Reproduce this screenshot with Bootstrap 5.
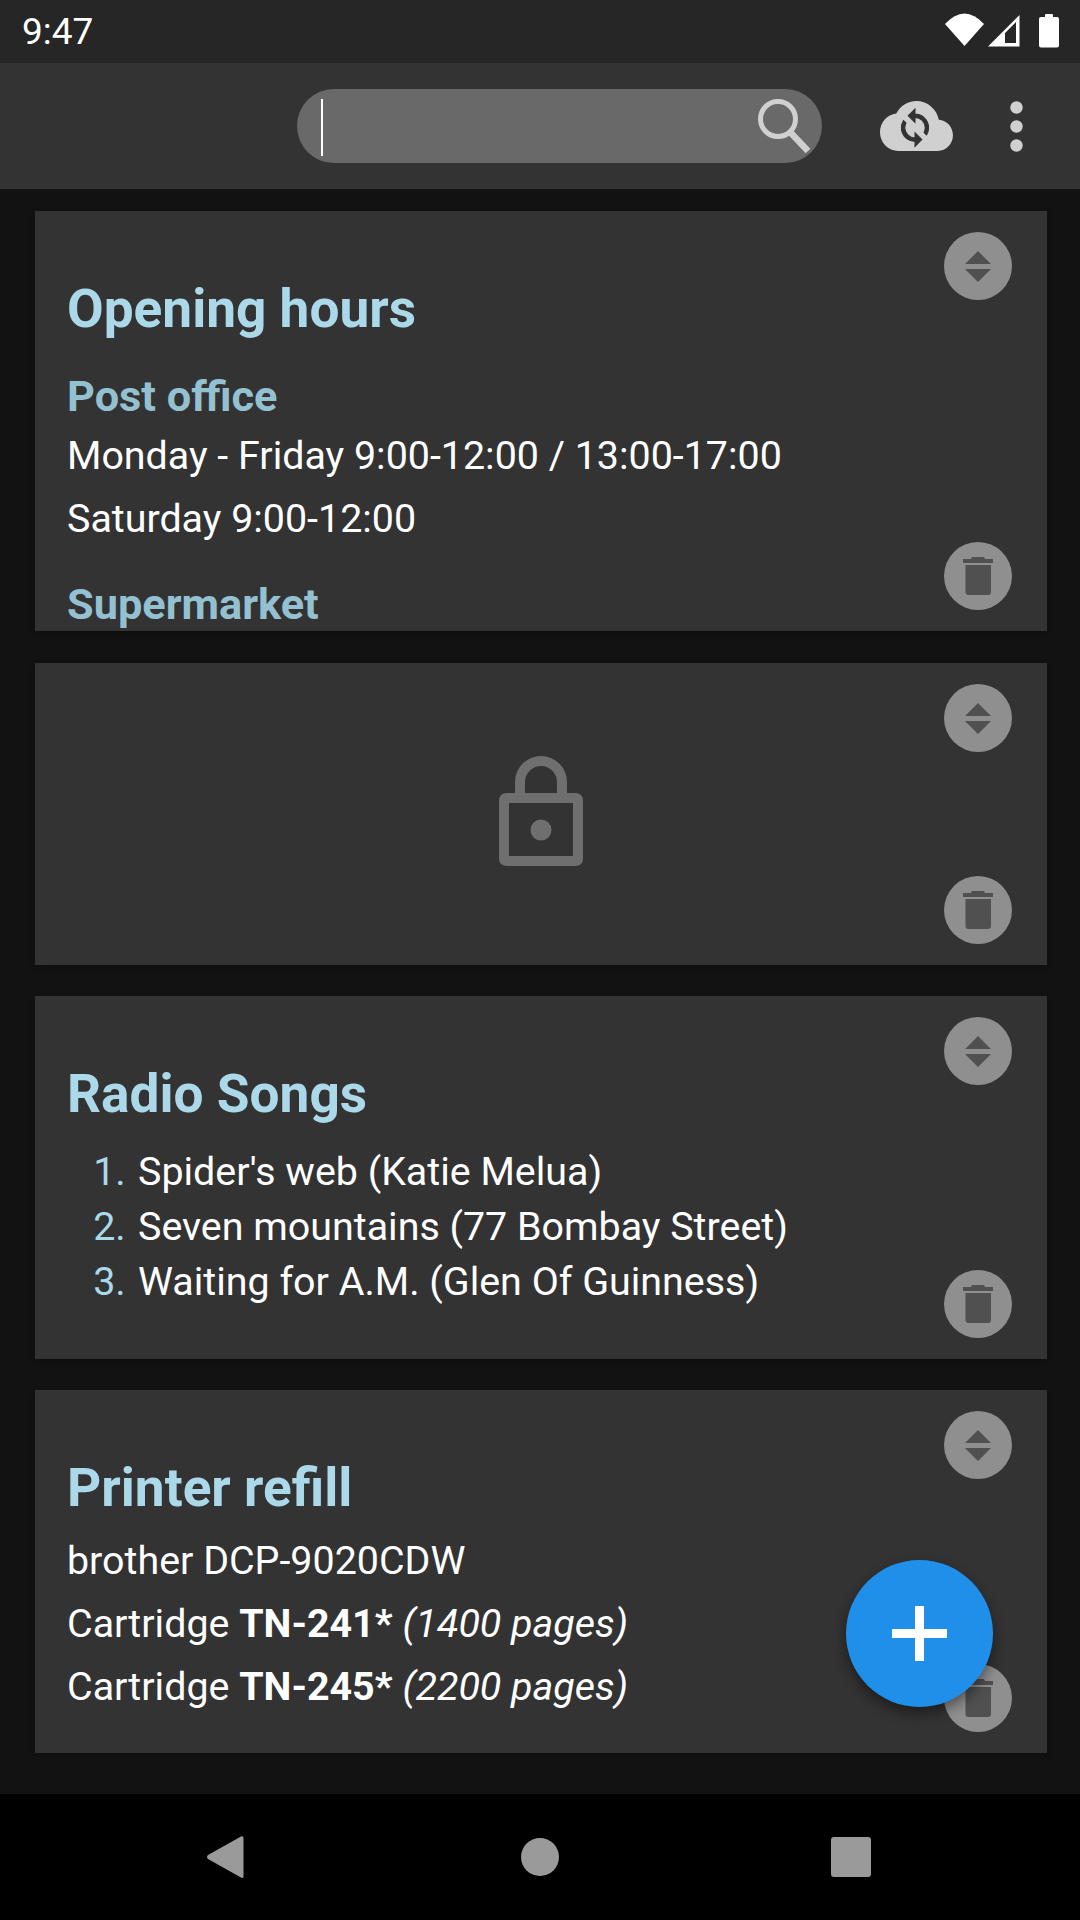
<!DOCTYPE html>
<html lang="en">
<head>
<meta charset="utf-8">
<title>Notes</title>
<link rel="stylesheet" href="https://cdn.jsdelivr.net/npm/bootstrap@5.3.0/dist/css/bootstrap.min.css">
<style>
html,body{height:1920px;overflow:hidden}
body{background:#121212;font-family:Roboto,"Liberation Sans",sans-serif;color:#fff;width:1080px;position:relative}
svg{display:block}
.status-strip{height:63px;background:#262626;padding:0 21px 0 22px}
.status-time{font-size:37px;line-height:1;letter-spacing:0}
.app-strip{height:126px;background:#333;padding-left:297px}
.search-pill{width:525px;height:74px;background:#696969;border-radius:37px;padding:10px 10px 7px 24px}
.search-caret{width:2px;height:57px;background:#fff}
.sync-slot{margin-left:58px}
.dots-slot{margin-left:57px}
.note-list{padding:22px 33px 0 35px}
.note-box{background:#333;border:0;border-radius:0;overflow:hidden;position:relative;padding:67px 32px 0;box-shadow:0 2px 6px rgba(0,0,0,.25);color:#fff}
.h-a{height:420px;margin-bottom:32px}
.h-b{height:302px;margin-bottom:31px;padding:0 0 6px}
.h-c{height:363px;margin-bottom:31px}
.h-d{height:363px}
.note-title{font-size:53.200px;font-weight:700;line-height:62px;color:#acd9e9;margin:0 0 19px}
.note-title.title-a{margin-bottom:32px}
.note-sub{font-size:43.300px;font-weight:700;line-height:50px;color:#93c1d1;margin:0 0 11px}
.note-sub.sub-b{margin-top:21px}
.note-line{font-size:39.400px;line-height:46px;margin:0 0 17px}
.round-act{position:absolute;right:35px;width:68px;height:68px;border-radius:50%;background:#8f8f8f}
.act-top{top:21px}
.act-bottom{bottom:21px}
.note-ol{font-size:39.400px;line-height:55px;margin:0;padding-left:68.500px}
.note-ol li{padding-left:2.500px}
.note-ol li::marker{color:#acd9e9}
.add-fab{position:absolute;left:846px;top:1560px;width:147px;height:147px;border-radius:50%;background:#208fe9;box-shadow:0 6px 14px rgba(0,0,0,.45)}
.add-fab:hover,.add-fab:active{background:#208fe9}
.sys-nav{position:absolute;left:0;right:0;bottom:0;height:126px;background:#000}
</style>
</head>
<body>
<div class="status-strip d-flex align-items-center justify-content-between">
  <span class="status-time">9:47</span>
  <svg width="114" height="63" viewBox="945 0 114 63"><path d="M945 24Q964.500 3 984 24L964.500 46Z" fill="#fff"/><path fill-rule="evenodd" d="M988 46.500L1019.500 15V46.500ZM1005 43H1016V22L1005 33Z" fill="#fff"/><path d="M1045 17V15Q1045 14 1046 14H1052Q1053 14 1053 15V17H1057Q1059 17 1059 19V45.500Q1059 47.500 1057 47.500H1041Q1039 47.500 1039 45.500V19Q1039 17 1041 17Z" fill="#fff"/></svg>
</div>
<div class="app-strip d-flex align-items-center">
  <div class="search-pill d-flex justify-content-between align-items-start">
    <div class="search-caret"></div>
    <svg width="54" height="55" viewBox="0 0 54 55"><circle cx="20" cy="20" r="17.500" fill="none" stroke="#d0d0d0" stroke-width="5"/><path d="M32 33L50 52" stroke="#d0d0d0" stroke-width="6.500" fill="none"/></svg>
  </div>
  <div class="sync-slot">
    <svg width="73" height="50" viewBox="0 0 73 50"><path transform="scale(3.04 3.12) translate(0 -4)" d="M19.350 10.040C18.670 6.590 15.640 4 12 4 9.110 4 6.600 5.640 5.350 8.040 2.340 8.360 0 10.910 0 14c0 3.310 2.690 6 6 6h13c2.760 0 5-2.240 5-5 0-2.640-2.050-4.780-4.650-4.960z" fill="#d0d0d0"/><path transform="translate(35 26.700) scale(1.700) translate(-12 -12)" d="M12 4V1L8 5l4 4V6c3.310 0 6 2.690 6 6 0 1.010-.25 1.970-.7 2.800l1.460 1.460C19.540 15.030 20 13.570 20 12c0-4.420-3.580-8-8-8zm0 14c-3.310 0-6-2.690-6-6 0-1.010.25-1.970.7-2.800L5.240 7.740C4.460 8.970 4 10.430 4 12c0 4.420 3.580 8 8 8v3l4-4-4-4v3z" fill="#333" stroke="#333" stroke-width=".6"/></svg>
  </div>
  <div class="dots-slot">
    <svg width="13" height="51" viewBox="0 0 13 51"><circle cx="6.500" cy="6.500" r="6.200" fill="#d0d0d0"/><circle cx="6.500" cy="25.500" r="6.200" fill="#d0d0d0"/><circle cx="6.500" cy="44.500" r="6.200" fill="#d0d0d0"/></svg>
  </div>
</div>
<main class="note-list">
  <section class="card note-box h-a">
    <h2 class="note-title title-a">Opening hours</h2>
    <h3 class="note-sub sub-a">Post office</h3>
    <p class="note-line">Monday - Friday 9:00-12:00 / 13:00-17:00</p>
    <p class="note-line">Saturday 9:00-12:00</p>
    <h3 class="note-sub sub-b">Supermarket</h3>
    <span class="round-act act-top"><svg width="68" height="68" viewBox="0 0 68 68"><path d="M34 19L47 32H21ZM34 50L47 37H21Z" fill="#505050"/></svg></span>
    <span class="round-act act-bottom"><svg width="68" height="68" viewBox="0 0 68 68"><path d="M19 17H27L28 15H40L41 17H49V21H19ZM21.500 23H47V50Q47 53 44 53H24.500Q21.500 53 21.500 50Z" fill="#505050"/></svg></span>
  </section>
  <section class="card note-box h-b d-flex align-items-center justify-content-center">
    <svg class="lock-mark" width="84" height="110" viewBox="0 0 84 110"><path fill-rule="evenodd" d="M16 37V26A26 26 0 0 1 68 26V37H76Q84 37 84 45V102Q84 110 76 110H8Q0 110 0 102V45Q0 37 8 37ZM26 37H58V26A16 16 0 0 0 26 26ZM10 47V100H74V47Z" fill="#6f6f6f"/><circle cx="42" cy="74" r="10.500" fill="#6f6f6f"/></svg>
    <span class="round-act act-top"><svg width="68" height="68" viewBox="0 0 68 68"><path d="M34 19L47 32H21ZM34 50L47 37H21Z" fill="#505050"/></svg></span>
    <span class="round-act act-bottom"><svg width="68" height="68" viewBox="0 0 68 68"><path d="M19 17H27L28 15H40L41 17H49V21H19ZM21.500 23H47V50Q47 53 44 53H24.500Q21.500 53 21.500 50Z" fill="#505050"/></svg></span>
  </section>
  <section class="card note-box h-c">
    <h2 class="note-title title-c">Radio Songs</h2>
    <ol class="note-ol">
      <li>Spider's web (Katie Melua)</li>
      <li>Seven mountains (77 Bombay Street)</li>
      <li>Waiting for A.M. (Glen Of Guinness)</li>
    </ol>
    <span class="round-act act-top"><svg width="68" height="68" viewBox="0 0 68 68"><path d="M34 19L47 32H21ZM34 50L47 37H21Z" fill="#505050"/></svg></span>
    <span class="round-act act-bottom"><svg width="68" height="68" viewBox="0 0 68 68"><path d="M19 17H27L28 15H40L41 17H49V21H19ZM21.500 23H47V50Q47 53 44 53H24.500Q21.500 53 21.500 50Z" fill="#505050"/></svg></span>
  </section>
  <section class="card note-box h-d">
    <h2 class="note-title title-d">Printer refill</h2>
    <p class="note-line">brother DCP-9020CDW</p>
    <p class="note-line">Cartridge <b>TN-241*</b> <i>(1400 pages)</i></p>
    <p class="note-line">Cartridge <b>TN-245*</b> <i>(2200 pages)</i></p>
    <span class="round-act act-top"><svg width="68" height="68" viewBox="0 0 68 68"><path d="M34 19L47 32H21ZM34 50L47 37H21Z" fill="#505050"/></svg></span>
    <span class="round-act act-bottom"><svg width="68" height="68" viewBox="0 0 68 68"><path d="M19 17H27L28 15H40L41 17H49V21H19ZM21.500 23H47V50Q47 53 44 53H24.500Q21.500 53 21.500 50Z" fill="#505050"/></svg></span>
  </section>
</main>
<button class="btn add-fab p-0 border-0 d-flex align-items-center justify-content-center" type="button" aria-label="Add"><svg width="55" height="55" viewBox="0 0 55 55"><path d="M23 0H32V23H55V32H32V55H23V32H0V23H23Z" fill="#fff"/></svg></button>
<nav class="sys-nav">
  <svg width="1080" height="126" viewBox="0 1794 1080 126"><path d="M241 1836.500Q243.500 1835.500 243.500 1838V1876Q243.500 1879 241 1877.500L208 1859Q206 1857 208 1855Z" fill="#9a9a9a"/><circle cx="540" cy="1857" r="19" fill="#9a9a9a"/><rect x="831" y="1837" width="40" height="40" rx="3" fill="#9a9a9a"/></svg>
</nav>
</body>
</html>
